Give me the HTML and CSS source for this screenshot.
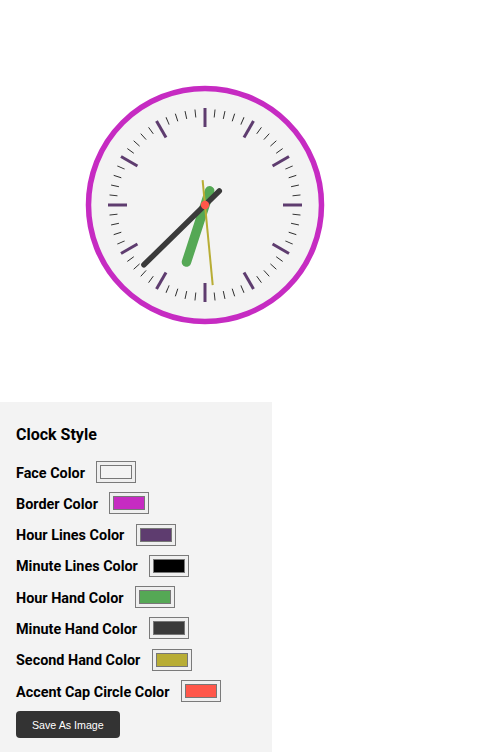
FILE: index.html
```html
<!DOCTYPE html>
<html lang="en">
<head>
<meta charset="utf-8">
<title>Clock Style</title>
<link rel="stylesheet" href="styles.css">
</head>
<body>
<div class="clock-wrap">
  <svg class="clock" width="250" height="250" viewBox="0 0 250 250">
    <circle cx="125" cy="125" r="116.5" fill="#f3f3f3" stroke="#c62bc2" stroke-width="5.5"/>
    <g id="ticks" stroke-linecap="butt"></g>
    <g transform="translate(125 125)">
      <line class="hand-hour" x1="0" y1="15" x2="0" y2="-60" transform="rotate(198)"/>
      <line class="hand-minute" x1="0" y1="20" x2="0" y2="-85.5" transform="rotate(225.6)"/>
      <line class="hand-second" x1="0" y1="25" x2="0" y2="-80.5" transform="rotate(174.5)"/>
      <circle class="cap" cx="0" cy="0" r="4.2"/>
    </g>
  </svg>
</div>

<section class="panel">
  <h3 class="panel-title">Clock Style</h3>
  <div class="rows">
    <label class="row"><span class="row-label">Face Color</span><input class="swatch" type="color" value="#f3f3f3"></label>
    <label class="row"><span class="row-label">Border Color</span><input class="swatch" type="color" value="#c62bc2"></label>
    <label class="row"><span class="row-label">Hour Lines Color</span><input class="swatch" type="color" value="#5e3c6f"></label>
    <label class="row"><span class="row-label">Minute Lines Color</span><input class="swatch" type="color" value="#000000"></label>
    <label class="row"><span class="row-label">Hour Hand Color</span><input class="swatch" type="color" value="#55a855"></label>
    <label class="row"><span class="row-label">Minute Hand Color</span><input class="swatch" type="color" value="#3a3a3a"></label>
    <label class="row"><span class="row-label">Second Hand Color</span><input class="swatch" type="color" value="#b8ad35"></label>
    <label class="row"><span class="row-label">Accent Cap Circle Color</span><input class="swatch" type="color" value="#ff574a"></label>
    <div class="actions"><button class="save-btn" type="button">Save As Image</button></div>
  </div>
</section>

<script>
  (function () {
    var g = document.getElementById('ticks');
    var ns = 'http://www.w3.org/2000/svg';
    for (var i = 0; i < 60; i++) {
      var hour = i % 5 === 0;
      var l = document.createElementNS(ns, 'line');
      l.setAttribute('x1', 0);
      l.setAttribute('x2', 0);
      l.setAttribute('y1', hour ? -78 : -88);
      l.setAttribute('y2', hour ? -97 : -96);
      l.setAttribute('class', hour ? 'tick-hour' : 'tick-minute');
      l.setAttribute('transform', 'translate(125 125) rotate(' + (i * 6) + ')');
      g.appendChild(l);
    }
  })();
</script>
</body>
</html>
```

FILE: styles.css
```css
html, body {
  margin: 0;
  padding: 0;
  background: #ffffff;
}

body {
  font-family: Roboto, "Liberation Sans", Arial, sans-serif;
  color: #000000;
}

.clock-wrap {
  padding: 80px 0 0 80px;
}

.clock {
  display: block;
}

.tick-hour {
  stroke: #5e3c6f;
  stroke-width: 3;
}

.tick-minute {
  stroke: #2a2a2a;
  stroke-width: 0.9;
}

.hand-hour {
  stroke: #55a855;
  stroke-width: 9.5;
  stroke-linecap: round;
}

.hand-minute {
  stroke: #3a3a3a;
  stroke-width: 5.5;
  stroke-linecap: round;
}

.hand-second {
  stroke: #b8ad35;
  stroke-width: 2;
}

.cap {
  fill: #ff574a;
}

.panel {
  margin-top: 72px;
  width: 272px;
  box-sizing: border-box;
  background: #f3f3f3;
  padding: 23px 16px 14px 16px;
}

.panel-title {
  margin: 0 0 17px 0;
  font-size: 16px;
  line-height: 19px;
  font-weight: 700;
}

.rows {
  display: flex;
  flex-direction: column;
  gap: 9.3px;
  align-items: flex-start;
}

.row {
  display: flex;
  align-items: center;
  gap: 11.5px;
  height: 22px;
}

.row-label {
  font-size: 14.4px;
  font-weight: 700;
  padding-top: 2px;
}

.swatch {
  -webkit-appearance: none;
  appearance: none;
  box-sizing: border-box;
  width: 40px;
  height: 22px;
  margin: 0;
  padding: 0 1px;
  border: 1px solid #7a7a7a;
  background: #efefef;
}

.swatch::-webkit-color-swatch-wrapper {
  padding: 3px 2px;
}

.swatch::-webkit-color-swatch {
  border: 1px solid #777777;
}

.save-btn {
  height: 27px;
  padding: 0 16px;
  border: none;
  border-radius: 4px;
  background: #333333;
  color: #ffffff;
  font-family: "Liberation Sans", Arial, sans-serif;
  font-size: 10.67px;
}
```
